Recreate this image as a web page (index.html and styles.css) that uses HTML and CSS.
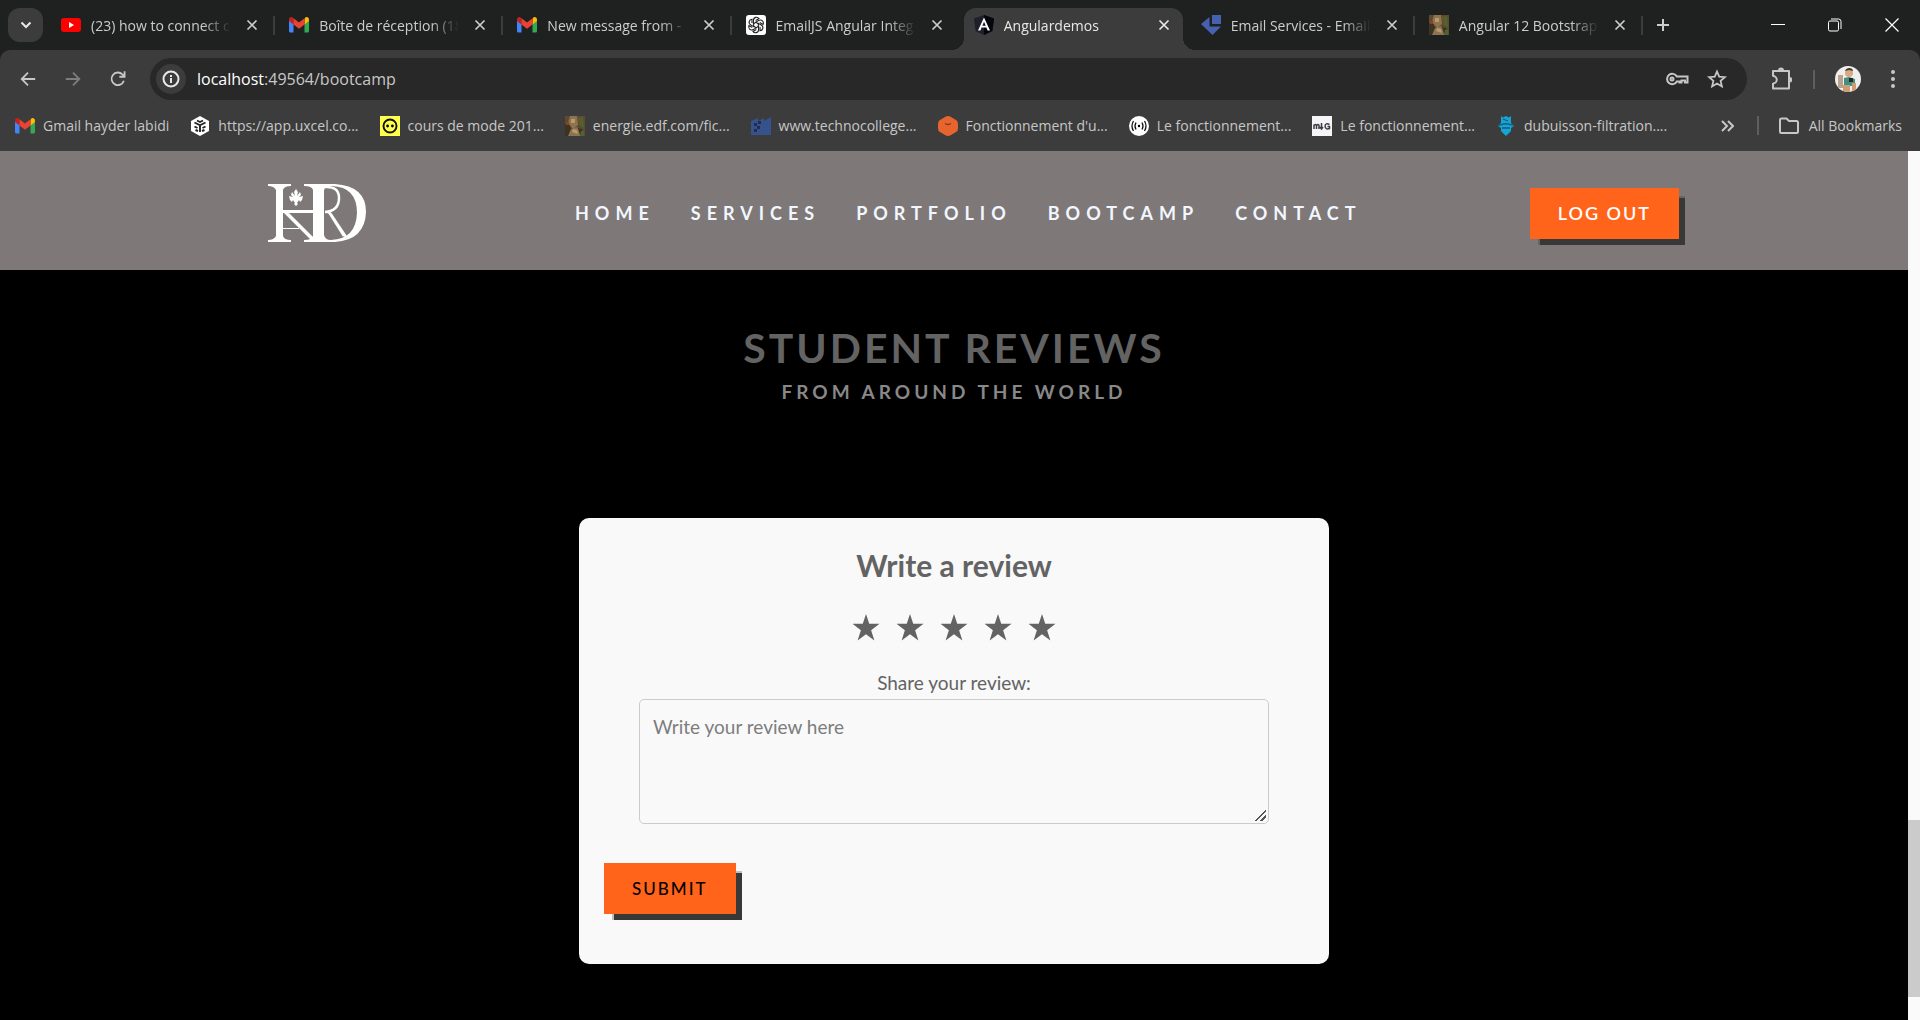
FILE: index.html
```html
<!DOCTYPE html>
<html lang="en">
<head>
<meta charset="utf-8">
<title>Angulardemos</title>
<link rel="stylesheet" href="styles.css">
</head>
<body>
<svg class="defs" aria-hidden="true">
  <symbol id="gmail" viewBox="0 0 20 16"><path fill="#4285f4" d="M0 3v11a1.5 1.5 0 0 0 1.5 1.5h3V6.500z"/><path fill="#34a853" d="M20 3v11a1.500 1.500 0 0 1-1.500 1.500h-3V6.500z"/><path fill="#fbbc04" d="M15.500 2.500v5L20 4V2.500C20 .2 17.500-.6 16 .7z"/><path fill="#c5221f" d="M0 2.500V4l4.500 3.500v-6L4 .7C2.500-.6 0 .2 0 2.500z"/><path fill="#ea4335" d="M4.500 1.200 10 5.400l5.500-4.200v6.300L10 11.700 4.500 7.500z"/></symbol>
  <symbol id="cross" viewBox="0 0 12 12"><path d="M1.500 1.500l9 9M10.500 1.500l-9 9" stroke="currentColor" stroke-width="1.700"/></symbol>
  <symbol id="photo" viewBox="0 0 20 20"><path fill="#5d4a30" d="M0 0h20v20H0z"/><path fill="#8d7450" d="M5 0h7l1 9-5 4-5-6zM4 14l8-3 5 9H3z"/><path fill="#3c3420" d="M0 8h4l2 5-3 7H0zM13 12l4 1 1 6h-3z"/><path fill="#4d6531" d="M12 2l6-1 1 11-4-2zM16 15h3v5h-4z"/><path fill="#b99a6c" d="M6 3h4v4H6zM8 13l4 1 1 4-6-2z"/><path fill="#9b3a24" d="M1 6h3v3H1zM14 3h2v3h-2z"/></symbol>
</svg>

<div class="browser">
  <div class="tabstrip">
    <button class="tab-search" aria-label="Search tabs"><svg width="12" height="8" viewBox="0 0 12 8"><path d="M1.500 1.500 6 6l4.500-4.500" fill="none" stroke="currentColor" stroke-width="2"/></svg></button>
    <div class="tabs">
      <div class="tab"><svg class="icon" viewBox="0 0 20 20"><rect y="3" width="20" height="14" rx="3" fill="#f00"/><path d="M8 7l5 3-5 3z" fill="#fff"/></svg><span class="tab-title">(23) how to connect c</span><button class="tab-close" aria-label="Close tab"><svg><use href="#cross"/></svg></button></div>
      <div class="tab"><svg class="icon"><use href="#gmail" y="2" height="16"/></svg><span class="tab-title">Boîte de réception (18</span><button class="tab-close" aria-label="Close tab"><svg><use href="#cross"/></svg></button></div>
      <div class="tab"><svg class="icon"><use href="#gmail" y="2" height="16"/></svg><span class="tab-title">New message from -</span><button class="tab-close" aria-label="Close tab"><svg><use href="#cross"/></svg></button></div>
      <div class="tab no-line"><svg class="icon" viewBox="0 0 20 20"><rect width="20" height="20" rx="3" fill="#fff"/><g fill="none" stroke="#222" stroke-width="1.100"><path id="petal" d="M10 7.300 7.400 8.800V5.500C7.400 2 11.500 1.300 13 3.600L9.700 5.500"/><use href="#petal" transform="rotate(60 10 10)"/><use href="#petal" transform="rotate(120 10 10)"/><use href="#petal" transform="rotate(180 10 10)"/><use href="#petal" transform="rotate(240 10 10)"/><use href="#petal" transform="rotate(300 10 10)"/></g></svg><span class="tab-title">EmailJS Angular Integ</span><button class="tab-close" aria-label="Close tab"><svg><use href="#cross"/></svg></button></div>
      <div class="tab active no-line"><svg class="icon" viewBox="0 0 20 20"><path fill="#1d1f2b" d="M10 0l10 3.500L18.400 16 10 20 1.600 16 0 3.500z"/><path fill="#05060d" d="M10 0l10 3.500L18.400 16 10 20z"/><path fill="#fff" fill-rule="evenodd" d="M10 2.500 4 15.500h2.400l1.200-3h4.800l1.200 3H16zm0 4.300 1.700 3.900H8.300z"/></svg><span class="tab-title">Angulardemos</span><button class="tab-close" aria-label="Close tab"><svg><use href="#cross"/></svg></button></div>
      <div class="tab"><svg class="icon" viewBox="0 0 20 20"><path fill="#4561b0" d="M11 0h9v9h-9zM0 9l8.500-7v9.500H20L11.500 20z"/></svg><span class="tab-title">Email Services - Email</span><button class="tab-close" aria-label="Close tab"><svg><use href="#cross"/></svg></button></div>
      <div class="tab"><svg class="icon"><use href="#photo"/></svg><span class="tab-title">Angular 12 Bootstrap</span><button class="tab-close" aria-label="Close tab"><svg><use href="#cross"/></svg></button></div>
    </div>
    <button class="new-tab" aria-label="New tab"><svg width="14" height="14" viewBox="0 0 14 14"><path d="M7 1v12M1 7h12" stroke="currentColor" stroke-width="2"/></svg></button>
    <div class="window-buttons">
      <button aria-label="Minimize"><svg width="14" height="14" viewBox="0 0 14 14"><path d="M0 6.500h14" stroke="currentColor"/></svg></button>
      <button aria-label="Restore"><svg width="14" height="14" viewBox="0 0 14 14" fill="none" stroke="currentColor"><rect x=".5" y="3" width="10" height="10" rx="1.500"/><path d="M3 1h7.500a2.500 2.500 0 0 1 2.500 2.500V11"/></svg></button>
      <button aria-label="Close"><svg width="14" height="14" viewBox="0 0 14 14"><path d="M.5.5l13 13M13.500.5l-13 13" stroke="currentColor" stroke-width="1.200"/></svg></button>
    </div>
  </div>

  <div class="chrome-bars">
    <div class="toolbar">
      <button class="tool" aria-label="Back"><svg viewBox="0 0 20 20"><path d="M18 10H3M10 3l-7 7 7 7"/></svg></button>
      <button class="tool dim" aria-label="Forward"><svg viewBox="0 0 20 20"><path d="M2 10h15M10 3l7 7-7 7"/></svg></button>
      <button class="tool" aria-label="Reload"><svg viewBox="0 0 20 20"><path d="M16.500 12A7 7 0 1 1 15 5l2 2M17.300 1.500V7.500H11.500"/></svg></button>
      <div class="omnibox">
        <button class="site-info" aria-label="Site information"><svg width="18" height="18" viewBox="0 0 18 18"><circle cx="9" cy="9" r="7.500" fill="none" stroke="currentColor" stroke-width="2"/><path d="M9 8v5M9 5v2" stroke="currentColor" stroke-width="2"/></svg></button>
        <div class="url"><span class="host">localhost</span>:49564/bootcamp</div>
        <button class="omni-action" aria-label="Passwords"><svg width="24" height="20" viewBox="0 0 24 20" fill="none" stroke="currentColor" stroke-width="2"><path d="M11.800 7.500H22.500v6H20v-2h-3.500v2h-2v-1h-2.700a5.200 5.200 0 1 1 0-5z"/><circle cx="7" cy="10" r="1.500"/></svg></button>
        <button class="omni-action" aria-label="Bookmark this tab"><svg width="20" height="20" viewBox="0 0 20 20" fill="none" stroke="currentColor" stroke-width="1.800"><path d="M10 2.500l2.200 5.200 5.700.5-4.300 3.700 1.300 5.500-4.900-2.900-4.900 2.900 1.300-5.500L2.100 8.200l5.700-.5z"/></svg></button>
      </div>
      <button class="ext" aria-label="Extensions"><svg width="22" height="24" viewBox="0 0 22 24" fill="currentColor"><path d="M3 4h16v17.500H3z" fill="none" stroke="currentColor" stroke-width="2" stroke-linejoin="round"/><path d="M8 3.500a3 3 0 0 1 6 0zM19.500 10a2.800 2.800 0 0 1 0 5.600z"/><path d="M1 9.500h3v6.500H1z" fill="#3c3c3c"/><path d="M3 9a3.600 3.600 0 0 1 0 7.500" fill="none" stroke="currentColor" stroke-width="2"/></svg></button>
      <span class="divider"></span>
      <button class="avatar" aria-label="Profile"><svg width="26" height="26" viewBox="0 0 26 26"><clipPath id="round"><circle cx="13" cy="13" r="13"/></clipPath><g clip-path="url(#round)"><path fill="#f1efed" d="M0 0h26v26H0z"/><path fill="#b8a48e" d="M3 9h5v13H3z"/><circle cx="14" cy="7" r="4" fill="#d9a885"/><path fill="#41352d" d="M10 5c1-4 8-4 8 0l-4-1z"/><path fill="#3f9080" d="M9 12l5-1 6 2v7H9z"/><path fill="#cf9c74" d="M8 19h7v7H8zM17 17h4v9h-4z"/><path fill="#232729" d="M14 12h4v4h-4z"/></g></svg></button>
      <button class="menu" aria-label="Menu"><svg width="4" height="18" viewBox="0 0 4 18" fill="currentColor"><circle cx="2" cy="2" r="2"/><circle cx="2" cy="9" r="2"/><circle cx="2" cy="16" r="2"/></svg></button>
    </div>

    <nav class="bookmarks" aria-label="Bookmarks">
      <a href="#"><svg class="icon"><use href="#gmail" y="2" height="16"/></svg>Gmail hayder labidi</a>
      <a href="#"><svg class="icon" viewBox="0 0 20 20"><path fill="#fff" d="M10 0l9 5v10l-9 5-9-5V5z"/><path d="M4.500 6.500 10 9.300l5.500-2.800M10 9.300V16M4.500 10.500l3 1.500M15.500 10.500l-3 1.500M5.500 14l2.500 1M14.500 14 12 15M7 4.500 10 6l3-1.500" fill="none" stroke="#222" stroke-width="1.900"/></svg>https://app.uxcel.co...</a>
      <a href="#"><svg class="icon" viewBox="0 0 20 20"><path fill="#ffff4d" d="M0 0h20v20H0z"/><circle cx="10" cy="10" r="6.500" fill="none" stroke="#111" stroke-width="1.900"/><circle cx="7.600" cy="10" r="1.400"/><circle cx="12.400" cy="10" r="1.400"/></svg>cours de mode 201...</a>
      <a href="#"><svg class="icon"><use href="#photo"/></svg>energie.edf.com/fic...</a>
      <a href="#"><svg class="icon" viewBox="0 0 20 20"><path fill="#35528c" d="M0 5l7-3v3l6-3v3l7-4v18H0z"/><path fill="#222d48" d="M3 7h3v3H3zM7 5h3v3H7zM6 10h3v3H6zM3 13h3v3H3z"/></svg>www.technocollege...</a>
      <a href="#"><svg class="icon" viewBox="0 0 20 20"><path fill="#e8642e" d="M7 1q3-2 6 0l5 3q2 1 2 4v4q0 3-2 4l-5 3q-3 2-6 0l-5-3q-2-1-2-4V8q0-3 2-4z"/><path d="M7 7.500q3 2 6 0" fill="none" stroke="#78381f" stroke-width="1.500"/></svg>Fonctionnement d'u...</a>
      <a href="#"><svg class="icon" viewBox="0 0 20 20"><circle cx="10" cy="10" r="10" fill="#fff"/><g fill="none" stroke="#111" stroke-width="1.300"><path d="M4.500 5q-3 5 0 10M7 6.500q-2 3.500 0 7M15.500 5q3 5 0 10M13 6.500q2 3.500 0 7"/></g><circle cx="10" cy="10" r="1.200"/></svg>Le fonctionnement...</a>
      <a href="#"><svg class="icon" viewBox="0 0 20 20"><path fill="#f5f5f7" d="M0 0h20v20H0z"/><path fill="none" stroke="#3b3b46" stroke-width="1.500" d="M2 13V8.500M2 9.500q2-2 2.500 0V13M4.500 9.500q2-2 2.500 0V13M9.500 7v6M8 11l1.500 2 1.500-2M17.500 8.500q-4-2-4.500 1.500.5 4 4.500 2.500V10.500h-2"/></svg>Le fonctionnement...</a>
      <a href="#"><svg class="icon" viewBox="0 0 20 20"><path fill="#16a5d8" d="M5 0l2 1.500L10 0l3 1.500L15 0v7l3 3-3 2v3l-3 3-2 2-2-2-3-3v-3l-3-2 3-3z"/><path d="M7 3l5 2M3 9.500q7-3.500 14 0M6 12h8" stroke="#155c78" fill="none" stroke-width="1.300"/></svg>dubuisson-filtration....</a>
      <button class="overflow" aria-label="More bookmarks"><svg width="13" height="12" viewBox="0 0 13 12" fill="none" stroke="currentColor" stroke-width="2"><path d="M1 1l5 5-5 5M7 1l5 5-5 5"/></svg></button>
      <span class="divider"></span>
      <a href="#" class="all"><svg class="icon" viewBox="0 0 20 20"><path d="M1 4q0-1.500 1.500-1.500h5l2.500 2.500h7.500Q19 5 19 6.500v9q0 1.500-1.500 1.500h-15Q1 17 1 15.500z" fill="none" stroke="currentColor" stroke-width="2"/></svg>All Bookmarks</a>
    </nav>
  </div>

  <div class="viewport">
    <div class="page">
      <header class="site-header">
        <a href="#" class="logo" aria-label="HRD home"><svg width="98" height="58" viewBox="0 0 98 58"><g fill="#fff"><path d="M0 0h23v2q-7 0-8 4v46q1 4 8 4v2H0v-2q6 0 8-4V6Q6 2 0 2z"/><path fill-rule="evenodd" d="M36 0h31q31 2 31 28Q97 56 67 58H36v-2q8 0 9-4V6q-1-4-9-4zM56 7v44q1 5 7 5 25-1 26-27Q89 3 64 2q-8 0-8 5z"/><path d="M15 26h32v3H15zM15 44h16v1H15z"/><path d="M14 27h5l26 26v5z"/><path d="M28 5l2 3-1 4 3-4 1 3-2 2 4-1-1 4-2 2-1-2-2 3 1 1-2 2-2-2 1-1-2-3-1 2-2-2-1-4 4 1-2-2 1-3 3 4-1-4z"/></g><path d="M57 3q14-1 14 11 0 13-14 14M61 28l15 24M58 28q3-1 6 4l14 21" fill="none" stroke="#fff" stroke-width="2.500"/></svg></a>
        <nav class="site-nav"><a href="#">HOME</a><a href="#">SERVICES</a><a href="#">PORTFOLIO</a><a href="#">BOOTCAMP</a><a href="#">CONTACT</a></nav>
        <button class="btn btn-light">LOG OUT</button>
      </header>
      <main>
        <h1>STUDENT REVIEWS</h1>
        <p class="subtitle">FROM AROUND THE WORLD</p>
        <form class="card">
          <h2>Write a review</h2>
          <div class="stars" role="radiogroup" aria-label="Rating">
            <input type="radio" name="rating" value="1" aria-label="1 star"><input type="radio" name="rating" value="2" aria-label="2 stars"><input type="radio" name="rating" value="3" aria-label="3 stars"><input type="radio" name="rating" value="4" aria-label="4 stars"><input type="radio" name="rating" value="5" aria-label="5 stars">
          </div>
          <div class="field">
            <label for="review">Share your review:</label>
            <textarea id="review" placeholder="Write your review here"></textarea>
          </div>
          <button type="button" class="btn btn-submit">SUBMIT</button>
        </form>
      </main>
    </div>
    <div class="scrollbar"><div class="thumb"></div></div>
  </div>
</div>
</body>
</html>
```
FILE: styles.css
```css
* { box-sizing: border-box; }
body { margin: 0; background: #000; font-family: "Open Sans", "Noto Sans", sans-serif; }
button { padding: 0; border: 0; background: none; color: inherit; font: inherit; display: grid; place-items: center; }
a { color: inherit; text-decoration: none; }
svg { display: block; flex: none; }
.defs { display: none; }
.icon { width: 20px; height: 20px; flex: none; }

.browser { min-height: 100vh; display: flex; flex-direction: column; }

/* Tab strip */
.tabstrip { height: 50px; padding: 8px 0 0 8px; display: flex; background: #1f2120; color: #ccc; }
.tab-search { width: 35px; height: 34px; border-radius: 12px; background: #3c3c3c; color: #e8e8e8; }
.tabs { display: flex; flex: 0 1 1596px; margin-left: 4px; min-width: 0; }
.tab { position: relative; flex: 1 1 0; min-width: 0; height: 42px; padding: 0 17px 8px 14px; display: flex; align-items: center; font-size: 14px; }
.tab:not(.no-line)::after { content: ""; position: absolute; right: 0; top: 8px; width: 2px; height: 19px; background: #3c3c3c; }
.tab-title { flex: 1; min-width: 0; margin-left: 10px; overflow: hidden; white-space: nowrap; mask-image: linear-gradient(to right, #000 calc(100% - 28px), transparent); }
.tab-close { width: 12px; height: 12px; margin-left: 15px; }
.tab-close svg { width: 12px; height: 12px; }
.tab.active { flex: 0 1 219px; background: #3c3c3c; border-radius: 12px 12px 0 0; color: #e8e8e8; margin: 0 4px; padding: 0 13px 8px 10px; }
.tab.active::before, .tab.active::after { content: ""; position: absolute; bottom: 0; width: 12px; height: 12px; }
.tab.active::before { left: -12px; background: radial-gradient(circle at 0 0, transparent 12px, #3c3c3c 12px); }
.tab.active::after { right: -12px; background: radial-gradient(circle at 100% 0, transparent 12px, #3c3c3c 12px); }
.new-tab { width: 40px; height: 34px; }
.window-buttons { margin-left: auto; display: flex; color: #fff; }
.window-buttons button { width: 57px; height: 34px; }

/* Toolbar and bookmarks */
.chrome-bars { background: #1f2120; color: #c7c7c7; }
.toolbar { height: 58px; padding: 0 15px 0 8px; display: flex; align-items: center; background: #3c3c3c; border-radius: 10px 10px 0 0; }
.tool { width: 40px; height: 40px; margin-right: 5px; }
.tool svg { width: 18px; height: 18px; fill: none; stroke: currentColor; stroke-width: 2; }
.dim { color: #7d7d7d; }
.omnibox { flex: 1; height: 42px; margin-left: 7px; padding: 0 10px 0 6px; display: flex; align-items: center; border-radius: 21px; background: #282828; }
.site-info { width: 30px; height: 30px; border-radius: 15px; background: #3c3c3c; color: #e8e8e8; }
.url { flex: 1; margin-left: 11px; font-size: 16px; color: #c7c7c7; }
.host { color: #fff; }
.omni-action { width: 40px; height: 34px; }
.ext { width: 40px; height: 40px; margin-left: 14px; }
.divider { width: 2px; height: 19px; background: #5e5e5e; }
.toolbar .divider { margin: 0 20px 0 12px; }
.menu { width: 24px; height: 34px; margin-left: 20px; }
.bookmarks { height: 43px; padding: 0 18px 8px 15px; display: flex; align-items: center; background: #3c3c3c; font-size: 14px; white-space: nowrap; overflow: hidden; }
.bookmarks a { display: flex; align-items: center; gap: 8px; margin-right: 21px; }
.overflow { margin-left: auto; margin-right: 23px; }
.bookmarks a.all { margin: 0 0 0 20px; gap: 10px; }

/* Web page */
.viewport { flex: 1; display: flex; }
.page { flex: 1; min-width: 0; background: #000; color: #636363; font-family: Lato, "Liberation Sans", sans-serif; font-size: 19px; }
.scrollbar { width: 12px; background: #fafafa; display: flex; flex-direction: column; justify-content: flex-end; padding-bottom: 23px; }
.thumb { height: 177px; background: #cbcbcb; }
.site-header { height: 119px; padding: 5px 229px 0 268px; display: flex; align-items: center; background: #7e7978; }
.site-nav { display: flex; gap: 36px; margin: 0 auto 0 209px; color: #f2f7ff; font-size: 18px; font-weight: 700; letter-spacing: 6px; }
.btn { height: 51px; padding: 0 28px; background: #ff641a; color: #000; font-family: inherit; font-size: 18px; font-weight: 500; letter-spacing: 2px; box-shadow: 8px 8px 0 -2px #383838, 7px 7px 0 -1px rgba(56, 56, 56, .3); }
.btn-light { color: #fff; font-weight: 600; }
.btn-submit { margin-top: 39px; font-size: 17px; }
main { padding: 53px 24px 56px; text-align: center; }
h1 { margin: 0; font-size: 41px; line-height: 50px; font-weight: 700; letter-spacing: 3px; }
.subtitle { margin: 5px 0 0; font-size: 19px; line-height: 28px; font-weight: 700; letter-spacing: 4px; color: #888; }
.card { max-width: 750px; margin: 112px auto 0; padding: 29px 25px 50px; border-radius: 10px; background: #f9f9f9; }
h2 { margin: 0; font-size: 30px; line-height: 36px; font-weight: 700; }
.stars { display: flex; justify-content: center; gap: 17px; margin: 31px 0 26px; }
.stars input { appearance: none; width: 27px; height: 27px; margin: 0; background: #636363; clip-path: polygon(50% 0, 62% 36%, 100% 36%, 69% 60%, 81% 98%, 50% 75%, 19% 98%, 31% 60%, 0 36%, 38% 36%); }
.field { padding: 0 35px; display: flex; flex-direction: column; }
.field label { line-height: 32px; }
textarea { height: 125px; padding: 12px 13px; border: 1px solid #ccc; border-radius: 5px; background: transparent; font-family: inherit; font-size: 19px; line-height: 30px; color: #636363; resize: both; max-width: 100%; }
textarea::placeholder { color: #7d7d7d; }
textarea::-webkit-resizer { background: linear-gradient(135deg, transparent 46%, #555 46% 56%, transparent 56% 72%, #555 72% 82%, transparent 82%) 2px 2px / 11px 11px no-repeat; }
```
